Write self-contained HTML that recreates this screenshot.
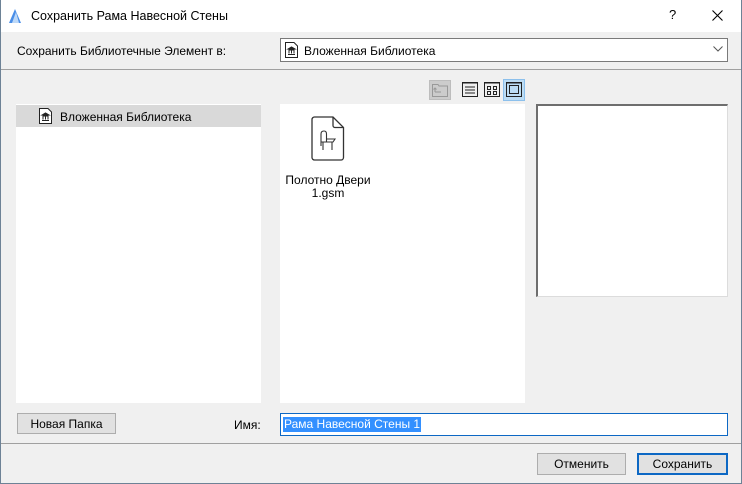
<!DOCTYPE html>
<html><head><meta charset="utf-8"><style>
*{margin:0;padding:0;box-sizing:border-box}
body{width:742px;height:484px;overflow:hidden;background:#f0f0f0;font-family:"Liberation Sans","DejaVu Sans",sans-serif;font-size:12px;color:#000;position:relative}
.a{position:absolute}
.win{left:0;top:0;width:742px;height:484px;border:1px solid #6d8296;border-top:none}
</style></head><body>
<div class="a" style="left:0;top:0;width:742px;height:32px;background:#fff"></div>
<svg class="a" style="left:8px;top:8px" width="14" height="16" viewBox="0 0 14 16"><polygon points="1,15 7,1 13,15" fill="#4a8ee8"/><polygon points="4,15 8,4 11,15" fill="#bcd8f8"/></svg>
<div class="a" style="left:31px;top:9px;font-size:12.5px">Сохранить Рама Навесной Стены</div>
<div class="a" style="left:669px;top:7px;font-size:13px">?</div>
<svg class="a" style="left:712px;top:10px" width="11" height="11"><path d="M0.5 0.5L10.5 10.5M10.5 0.5L0.5 10.5" stroke="#000" stroke-width="1.1"/></svg>
<div class="a" style="left:17px;top:44px">Сохранить Библиотечные Элемент в:</div>
<div class="a" style="left:280px;top:38px;width:448px;height:24px;background:#fff;border:1px solid #7a7a7a"></div>
<svg class="a" style="left:285px;top:42px" width="13" height="16" viewBox="0 0 13 16"><path d="M0.5 0.5H9L12.5 4V15.5H0.5Z" fill="#fff" stroke="#222"/><path d="M3 7L6.5 5L10 7ZM3.5 8H9.5M4 8.5V11.5M6.5 8.5V11.5M9 8.5V11.5M3 12.5H10" stroke="#222" fill="#222"/></svg>
<div class="a" style="left:304px;top:44px">Вложенная Библиотека</div>
<svg class="a" style="left:713px;top:46px" width="10" height="6"><path d="M0.5 0.5L5 5L9.5 0.5" stroke="#555" fill="none"/></svg>
<div class="a" style="left:0;top:69px;width:742px;height:1px;background:#a0a0a0"></div>

<div class="a" style="left:429px;top:80px;width:22px;height:20px;background:#cccccc;border:1px solid #bdbdbd"></div>
<svg class="a" style="left:432px;top:83px" width="16" height="14"><path d="M0.5 1.5H6L7 3H15.5V13.5H0.5Z" fill="none" stroke="#999"/><path d="M3 9H9M3 5V9M1.5 6.5L3 5L4.5 6.5" stroke="#999" fill="none"/></svg>
<svg class="a" style="left:462px;top:82px" width="16" height="15"><rect x="0.5" y="0.5" width="15" height="14" fill="none" stroke="#222"/><path d="M0 1H16M3 5H13M3 8H13M3 11H13" stroke="#222"/></svg>
<svg class="a" style="left:484px;top:82px" width="16" height="15"><rect x="0.5" y="0.5" width="15" height="14" fill="none" stroke="#222"/><path d="M0 1H16" stroke="#222"/><rect x="3.5" y="4.5" width="3" height="3" fill="none" stroke="#222"/><rect x="9.5" y="4.5" width="3" height="3" fill="none" stroke="#222"/><rect x="3.5" y="9.5" width="3" height="3" fill="none" stroke="#222"/><rect x="9.5" y="9.5" width="3" height="3" fill="none" stroke="#222"/></svg>
<div class="a" style="left:503px;top:79px;width:22px;height:22px;background:#bcdcf4;border:1px solid #8cc0ec"></div>
<svg class="a" style="left:506px;top:82px" width="16" height="15"><rect x="0.5" y="0.5" width="15" height="14" fill="none" stroke="#222"/><path d="M0 1H16" stroke="#222"/><rect x="3.5" y="3.5" width="9" height="8" fill="none" stroke="#222"/></svg>

<div class="a" style="left:16px;top:104px;width:245px;height:299px;background:#fff"></div>
<div class="a" style="left:16px;top:105px;width:245px;height:22px;background:#d9d9d9"></div>
<svg class="a" style="left:39px;top:108px" width="13" height="16" viewBox="0 0 13 16"><path d="M0.5 0.5H9L12.5 4V15.5H0.5Z" fill="#fff" stroke="#222"/><path d="M3 7L6.5 5L10 7ZM3.5 8H9.5M4 8.5V11.5M6.5 8.5V11.5M9 8.5V11.5M3 12.5H10" stroke="#222" fill="#222"/></svg>
<div class="a" style="left:60px;top:110px">Вложенная Библиотека</div>

<div class="a" style="left:280px;top:104px;width:245px;height:299px;background:#fff"></div>
<svg class="a" style="left:311px;top:116px" width="34" height="45" viewBox="0 0 34 45"><path d="M3.5 1H22L32.5 11.5V41.5A2.5 2.5 0 0 1 30 44H3.5A2.5 2.5 0 0 1 1 41.5V3.5A2.5 2.5 0 0 1 3.5 1Z" fill="#fff" stroke="#333" stroke-width="1.3"/><path d="M22 1V9.5A2 2 0 0 0 24 11.5H32.5" fill="none" stroke="#333" stroke-width="1.3"/><path d="M10 30V18Q10 15 13 15Q15.5 15 15.5 18V26M10 26H22L24 23H15.5M12 26V34M21 26V34" fill="none" stroke="#333" stroke-width="1.1"/></svg>
<div class="a" style="left:280px;top:174px;width:96px;text-align:center;line-height:13px">Полотно Двери<br>1.gsm</div>

<div class="a" style="left:536px;top:104px;width:192px;height:193px;background:#fff;border:1px solid #dcdcdc;border-left:2px solid #6e6e6e;border-top:2px solid #6e6e6e"></div>

<div class="a" style="left:17px;top:413px;width:99px;height:21px;background:#e1e1e1;border:1px solid #adadad;text-align:center;line-height:20px">Новая Папка</div>
<div class="a" style="left:234px;top:418px">Имя:</div>
<div class="a" style="left:280px;top:413px;width:448px;height:23px;background:#fff;border:1px solid #0d68c4"></div>
<div class="a" style="left:283px;top:417px;height:15px;padding:0 1px;background:#3390ff;color:#fff;line-height:15px">Рама Навесной Стены 1</div>

<div class="a" style="left:0;top:443px;width:742px;height:1px;background:#a0a0a0"></div>
<div class="a" style="left:537px;top:453px;width:89px;height:22px;background:#e1e1e1;border:1px solid #adadad;text-align:center;line-height:20px">Отменить</div>
<div class="a" style="left:637px;top:453px;width:91px;height:22px;background:#e1e1e1;border:2px solid #0d68c4;text-align:center;line-height:18px">Сохранить</div>
<div class="a win"></div>
</body></html>
